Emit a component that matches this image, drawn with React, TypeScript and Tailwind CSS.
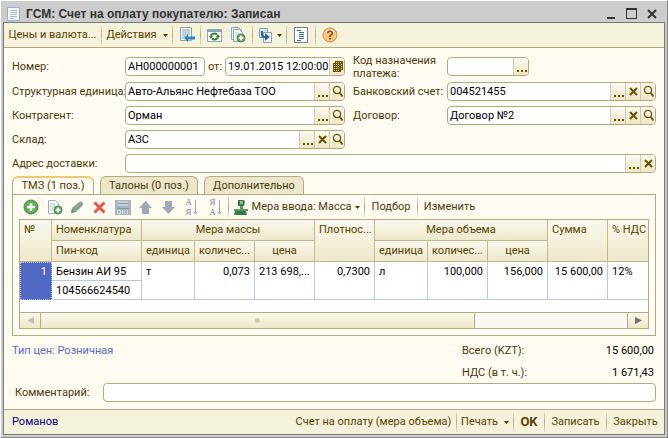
import React from "react";

type Tool = "more" | "clear" | "find" | "calendar";

const toolNames: Record<Tool, string> = {
  more: "Выбрать",
  clear: "Очистить",
  find: "Открыть",
  calendar: "Календарь",
};

function ToolGlyph({ tool }: { tool: Tool }) {
  if (tool === "more")
    return (
      <svg width="13" height="17" viewBox="0 0 13 17" className="shrink-0" fill="#6b5200" shapeRendering="crispEdges">
        <path d="M2 12h2v2H2zM6 12h2v2H6zM10 12h2v2h-2z" />
      </svg>
    );
  if (tool === "clear")
    return (
      <svg width="13" height="17" viewBox="0 0 13 17" className="shrink-0" fill="none" stroke="#6b5200" strokeWidth="2">
        <path d="M3 5l7 7M10 5l-7 7" />
      </svg>
    );
  if (tool === "find")
    return (
      <svg width="13" height="17" viewBox="0 0 13 17" className="shrink-0" fill="none" stroke="#6b5200">
        <circle cx="6" cy="7" r="3.6" strokeWidth="1.3" />
        <path d="M8.5 9.5l3 4" strokeWidth="1.8" />
      </svg>
    );
  return (
    <svg width="13" height="17" viewBox="0 0 13 17" className="shrink-0" shapeRendering="crispEdges">
      <path d="M4 3h8v9h-2v2H2V5h2z" fill="#6b5200" />
      <path d="M5 4h1v1H5zM7 4h1v1H7zM9 4h1v1H9zM3 6h1v1H3zM5 6h1v1H5zM7 6h1v1H7zM10 6h1v1h-1zM3 8h1v1H3zM5 8h1v1H5zM7 8h1v1H7zM10 8h1v1h-1zM3 10h1v1H3zM5 10h1v1H5zM7 10h1v1H7zM10 10h1v1h-1zM3 12h1v1H3zM5 12h1v1H5zM7 12h1v1H7z" fill="#e9dfb8" />
    </svg>
  );
}

function Field({ id, value = "", tools = [], className = "w-full" }: { id: string; value?: string; tools?: Tool[]; className?: string }) {
  return (
    <div className={`flex h-[19px] overflow-hidden rounded border border-[#b3aa80] bg-white ${className}`}>
      <input id={id} defaultValue={value} className="min-w-0 flex-1 bg-transparent pl-0.5 text-black outline-none" />
      {tools.map((tool) => (
        <button
          key={tool}
          type="button"
          aria-label={toolNames[tool]}
          className="flex w-[15px] shrink-0 items-center justify-center border-l border-[#d3ccab] bg-linear-to-b from-[#fbf9ee] to-[#ece7c8]"
        >
          <ToolGlyph tool={tool} />
        </button>
      ))}
    </div>
  );
}

function Separator() {
  return <span className="h-5 w-px shrink-0 bg-linear-to-b from-[#e5e0c4] via-[#b3aa80] to-[#e5e0c4]" />;
}

function Caret() {
  return (
    <svg width="5" height="3" viewBox="0 0 5 3" className="shrink-0" fill="#4d3b00">
      <path d="M0 0h5L2.5 3z" />
    </svg>
  );
}

function Action({ className, label, children }: { className: string; label?: string; children: React.ReactNode }) {
  return (
    <button type="button" aria-label={label} className={`flex h-6 shrink-0 items-center justify-center whitespace-nowrap ${className}`}>
      {children}
    </button>
  );
}

function PlusBadge({ x, y, r }: { x: number; y: number; r: number }) {
  const arm = r * 0.55;
  return (
    <>
      <circle cx={x} cy={y} r={r} fill="#69b05e" stroke="#438645" />
      <path d={`M${x - arm} ${y}h${arm * 2}M${x} ${y - arm}v${arm * 2}`} stroke="#fff" strokeWidth="2" />
    </>
  );
}

function CopyAddIcon() {
  return (
    <svg width="16" height="16" viewBox="0 0 16 16" fill="none">
      <path d="M1.5 .5h7l3 3v9h-10z" fill="#edf3f6" stroke="#8da7b8" />
      <path d="M3.5 2.5h6l3 3v9h-9z" fill="#fff" stroke="#8da7b8" />
      <path d="M5 6h4M5 8h3M5 10h3" stroke="#b8cbd7" />
      <PlusBadge x={11} y={11} r={4} />
    </svg>
  );
}

function PageAddIcon() {
  return (
    <svg width="16" height="16" viewBox="0 0 16 16" fill="none">
      <path d="M1.5 1.5h7l3 3v10h-10z" fill="#fff" stroke="#9bb0bd" />
      <path d="M3 5h5M3 7h6M3 9h4M3 11h3" stroke="#b4c7d3" />
      <PlusBadge x={11} y={11} r={4} />
    </svg>
  );
}

function SortIcon({ top, bottom }: { top: string; bottom: string }) {
  return (
    <span className="flex items-center gap-px text-[#7d858e]">
      <span className="flex flex-col font-['Liberation_Serif',serif] text-[9px] leading-[10px]">
        <span>{top}</span>
        <span>{bottom}</span>
      </span>
      <svg width="6" height="17" viewBox="0 0 6 17" fill="none" stroke="#a2a6a9">
        <path d="M2.5 1v14M.5 12.5l2 2.5 2-2.5" />
      </svg>
    </span>
  );
}

function Tab({ active = false, className, children }: { active?: boolean; className: string; children: React.ReactNode }) {
  return (
    <button
      type="button"
      role="tab"
      aria-selected={active}
      className={`rounded-t-md border border-b-0 border-[#b3aa80] ${
        active ? "-mb-px h-[19px] border-t-2 border-t-[#eac974] bg-[#fffbf0] pb-px" : "h-[18px] bg-[#ece6ca]"
      } ${className}`}
    >
      {children}
    </button>
  );
}

const th = "border-r border-b border-[#c1b88e] bg-linear-to-b from-[#faf8ed] to-[#ede8ca] px-0.5 font-normal whitespace-nowrap";
const thLeft = `${th} pl-1 pr-0 text-left`;
const thTall = `${thLeft} pt-[3px] align-top`;
const td = "border-r border-b border-[#b4c9e6] px-1 pt-0.5 align-top leading-4 whitespace-nowrap";

export default function App() {
  return (
    <div className="flex min-h-screen flex-col border-t border-r border-b border-l border-t-white border-r-[#858585] border-b-[#858585] border-l-white bg-[#cccccc] px-0.5 pb-0.5 font-['Roboto','Liberation_Sans',sans-serif] text-[11px] leading-[14px] text-[#4b3a0c]">
      <header className="flex h-[21px] items-center pt-1 pr-1 pl-1">
        <svg width="13" height="14" viewBox="0 0 13 14" fill="none">
          <path d="M.5.5h12v13H.5z" fill="#f5fafc" stroke="#93afc1" />
          <path d="M3 3.5h7M3 5.5h7M3 7.5h7M3 9.5h7M3 11.5h4" stroke="#a2bccb" />
        </svg>
        <h1 className="ml-1.5 flex-1 font-['Liberation_Sans',sans-serif] text-[12px] font-bold text-[#333333]">ГСМ: Счет на оплату покупателю: Записан</h1>
        <button type="button" aria-label="Свернуть" className="w-5">
          <svg width="20" height="13" viewBox="0 0 20 13"><path d="M6 10h8v2H6z" fill="#333" /></svg>
        </button>
        <button type="button" aria-label="Развернуть" className="w-5">
          <svg width="20" height="13" viewBox="0 0 20 13"><path d="M5 1h11v11H5zM6 3v8h9V3z" fillRule="evenodd" fill="#333" /></svg>
        </button>
        <button type="button" aria-label="Закрыть окно" className="w-5">
          <svg width="20" height="13" viewBox="0 0 20 13"><path d="M7 3l8 8M15 3l-8 8" stroke="#333" strokeWidth="2" /></svg>
        </button>
      </header>

      <div className="flex flex-1 flex-col border border-[#777777] bg-[#fffbf0]">
        <nav className="flex h-[25px] items-center border-b border-[#b3aa80] bg-[#f5f2dc] text-[#594300]">
          <Action className="w-[97px]">Цены и валюта...</Action>
          <Separator />
          <Action className="w-[70px] gap-1.5">Действия <Caret /></Action>
          <Separator />
          <Action className="w-[27px]" label="Перейти">
            <svg width="16" height="16" viewBox="0 0 16 16" fill="none">
              <path d="M1.5.5h11v13h-11z" fill="#f4f8fa" stroke="#879fae" />
              <path d="M3 3h8M3 5h8M3 7h8M3 9h4M3 11h2" stroke="#8ca6b8" />
              <path d="M5 11l4-4v2.5h7v3H9V15z" fill="#3580b5" />
            </svg>
          </Action>
          <Separator />
          <Action className="w-[27px]" label="Обновить">
            <svg width="15" height="13" viewBox="0 0 15 13" fill="none">
              <path d="M.5.5h14v12H.5z" fill="#fff" stroke="#8fa8b5" />
              <path d="M1 1h13v2H1z" fill="#87a6b8" />
              <path d="M4 7a3.5 3 0 0 1 6-1.5M11 8a3.5 3 0 0 1-6 1.5" stroke="#398237" strokeWidth="2" />
              <path d="M2 7h4L4 10zM9 8h4L11 5z" fill="#398237" />
            </svg>
          </Action>
          <Action className="w-6 pr-1" label="Скопировать"><CopyAddIcon /></Action>
          <Separator />
          <Action className="w-[33px] gap-1" label="Ввести на основании">
            <svg width="15" height="15" viewBox="0 0 15 15" fill="none">
              <path d="M1.5.5h8v9h-8z" fill="#dfe8ef" stroke="#8ba2b4" />
              <path d="M5.5 4.5h8v10h-8z" fill="#f7fafc" stroke="#8ba2b4" />
              <path d="M4 3v4q0 2 3 2" stroke="#276b9e" strokeWidth="2" />
              <path d="M7 5l5 4-5 4z" fill="#276b9e" />
            </svg>
            <Caret />
          </Action>
          <Separator />
          <Action className="w-7" label="Список">
            <svg width="14" height="16" viewBox="0 0 14 16" fill="none" shapeRendering="crispEdges">
              <path d="M.5.5h13v15H.5z" fill="#fff" stroke="#717d89" />
              <path d="M3 3.5h4M5 5.5h5M5 7.5h5M5 9.5h5M5 11.5h5M3 13.5h4" stroke="#356d9c" />
            </svg>
          </Action>
          <Separator />
          <Action className="w-[27px]" label="Справка">
            <svg width="16" height="16" viewBox="0 0 16 16" fill="none">
              <circle cx="8" cy="8" r="7" fill="#fcc581" stroke="#cc8f4c" />
              <path d="M3 5a6 5 0 0 1 10 0q-5 3-10 0" fill="#fee8c7" />
              <path d="M5.8 6.5q0-2.3 2.2-2.3t2.2 2Q10.2 7.5 8 8.7v1.3" stroke="#855018" strokeWidth="1.6" />
              <path d="M7.2 11h1.7v1.6H7.2z" fill="#855018" />
            </svg>
          </Action>
        </nav>

        <main className="flex flex-1 flex-col px-2 pt-[9px]">
          <form className="grid grid-cols-[113px_minmax(0,220fr)_102px_minmax(0,209fr)] items-center gap-y-[5px]">
            <label htmlFor="number">Номер:</label>
            <div className="mb-px flex items-center">
              <Field id="number" value="АН000000001" className="w-20 shrink-0" />
              <label htmlFor="date" className="w-5 shrink-0 text-center">от:</label>
              <Field id="date" value="19.01.2015 12:00:00" tools={["calendar"]} className="min-w-0 flex-1" />
            </div>
            <label htmlFor="purpose" className="-my-2 pl-2 leading-[13px]">Код назначения платежа:</label>
            <Field id="purpose" tools={["more"]} className="mb-px w-[82px]" />

            <label htmlFor="unit" className="whitespace-nowrap">Структурная единица:</label>
            <Field id="unit" value="Авто-Альянс Нефтебаза ТОО" tools={["more", "find"]} />
            <label htmlFor="account" className="pl-2 whitespace-nowrap">Банковский счет:</label>
            <Field id="account" value="004521455" tools={["more", "clear", "find"]} />

            <label htmlFor="partner">Контрагент:</label>
            <Field id="partner" value="Орман" tools={["more", "find"]} />
            <label htmlFor="contract" className="pl-2">Договор:</label>
            <Field id="contract" value="Договор №2" tools={["more", "clear", "find"]} />

            <label htmlFor="store">Склад:</label>
            <Field id="store" value="АЗС" tools={["more", "clear", "find"]} />
            <label htmlFor="address" className="col-start-1">Адрес доставки:</label>
            <Field id="address" tools={["more", "clear"]} className="col-span-3" />
          </form>

          <div role="tablist" className="mt-[3px] flex items-end gap-1.5 text-[#4b3a0c]">
            <Tab active className="w-[82px]">ТМЗ (1 поз.)</Tab>
            <Tab className="w-[98px]">Талоны (0 поз.)</Tab>
            <Tab className="w-[100px]">Дополнительно</Tab>
          </div>

          <section className="border border-[#b3aa80] px-1.5 pb-1.5">
            <div className="flex h-6 items-center">
              <Action className="w-6" label="Добавить">
                <svg width="16" height="16" viewBox="0 0 16 16" fill="none">
                  <circle cx="8" cy="8" r="7" fill="#62ad59" stroke="#3d8944" />
                  <path d="M4 8h8M8 4v8" stroke="#fff" strokeWidth="2.5" />
                </svg>
              </Action>
              <Action className="w-[23px]" label="Добавить копированием"><PageAddIcon /></Action>
              <Action className="w-[22px]" label="Изменить строку">
                <svg width="14" height="14" viewBox="0 0 14 14"><path d="M1 13l1-5 7-6q2-1 3 0t1 3l-7 7z" fill="#8aa58c" /><path d="M2 9l3 3-4 1z" fill="#6c9170" /></svg>
              </Action>
              <Action className="w-[23px]" label="Удалить">
                <svg width="13" height="13" viewBox="0 0 13 13"><path d="M1.5 1.5l10 10M11.5 1.5l-10 10" stroke="#e35a46" strokeWidth="3" /></svg>
              </Action>
              <Action className="w-[23px]" label="Завершить редактирование">
                <svg width="16" height="15" viewBox="0 0 16 15" fill="none">
                  <path d="M0 0h16v15H0z" fill="#a8b4bf" />
                  <path d="M3 1h10v5H3z" fill="#c7d0d7" />
                  <path d="M3 3.5h10M2 8.5h12" stroke="#8797a5" />
                  <path d="M2.5 10.5h3v3h-3zM7.5 10v4M10.5 10l-2 2 2 2M12.5 10v4" stroke="#dbe2e7" />
                </svg>
              </Action>
              <Action className="w-[23px]" label="Вверх">
                <svg width="13" height="13" viewBox="0 0 13 13"><path d="M6.5 0L13 7H10v6H3V7H0z" fill="#9dabb7" /></svg>
              </Action>
              <Action className="w-[23px]" label="Вниз">
                <svg width="13" height="13" viewBox="0 0 13 13"><path d="M6.5 13L13 6H10V0H3v6H0z" fill="#9dabb7" /></svg>
              </Action>
              <Action className="w-6" label="Сортировать по возрастанию"><SortIcon top="А" bottom="Я" /></Action>
              <Action className="w-6" label="Сортировать по убыванию"><SortIcon top="Я" bottom="А" /></Action>
              <Separator />
              <Action className="w-[135px] gap-1">
                <svg width="15" height="16" viewBox="0 0 15 16">
                  <path d="M5 1h6l1 2-1 4H5z" fill="#397b48" />
                  <path d="M7 2h3v3H7z" fill="#91bd95" />
                  <path d="M7 7h3v3h5v2H1v-2h6z" fill="#5a9963" />
                  <path d="M2 12h11l1 4H1z" fill="#397b48" />
                </svg>
                Мера ввода: Масса <Caret />
              </Action>
              <Separator />
              <Action className="w-[52px]">Подбор</Action>
              <Separator />
              <Action className="w-[63px]">Изменить</Action>
            </div>

            <div className="border border-[#b3aa80] bg-white">
              <table className="w-full table-fixed border-separate border-spacing-0">
                <colgroup>
                  <col className="w-[32px]" />
                  <col className="w-[90px]" />
                  <col className="w-[53px]" />
                  <col className="w-[60px]" />
                  <col className="w-[60px]" />
                  <col className="w-[60px]" />
                  <col className="w-[53px]" />
                  <col className="w-[60px]" />
                  <col className="w-[60px]" />
                  <col className="w-[60px]" />
                  <col className="w-[40px]" />
                </colgroup>
                <thead className="text-[#594300]">
                  <tr className="h-[21px]">
                    <th rowSpan={2} className={thTall}>№</th>
                    <th className={thLeft}>Номенклатура</th>
                    <th colSpan={3} className={th}>Мера массы</th>
                    <th rowSpan={2} className={thTall}>Плотнос...</th>
                    <th colSpan={3} className={th}>Мера объема</th>
                    <th rowSpan={2} className={thTall}>Сумма</th>
                    <th rowSpan={2} className={`${thTall} border-r-0`}>% НДС</th>
                  </tr>
                  <tr className="h-[21px]">
                    <th className={thLeft}>Пин-код</th>
                    <th className={th}>единица</th>
                    <th className={th}>количес...</th>
                    <th className={th}>цена</th>
                    <th className={th}>единица</th>
                    <th className={th}>количес...</th>
                    <th className={th}>цена</th>
                  </tr>
                </thead>
                <tbody className="text-black">
                  <tr className="h-[19px]">
                    <td rowSpan={2} className="border border-dotted border-[#b8c5f0] bg-[#5068c3] px-1 pt-px text-right align-top leading-4 text-white">1</td>
                    <td className={td}>Бензин АИ 95</td>
                    <td rowSpan={2} className={td}>т</td>
                    <td rowSpan={2} className={`${td} text-right`}>0,073</td>
                    <td rowSpan={2} className={td}>213 698,...</td>
                    <td rowSpan={2} className={`${td} text-right`}>0,7300</td>
                    <td rowSpan={2} className={td}>л</td>
                    <td rowSpan={2} className={`${td} text-right`}>100,000</td>
                    <td rowSpan={2} className={`${td} text-right`}>156,000</td>
                    <td rowSpan={2} className={`${td} text-right`}>15 600,00</td>
                    <td rowSpan={2} className={`${td} border-r-0`}>12%</td>
                  </tr>
                  <tr className="h-[19px]">
                    <td className={td}>104566624540</td>
                  </tr>
                </tbody>
              </table>
              <div className="mt-3 flex h-4 border-t border-[#b3aa80] bg-[#faf8f0]">
                <button type="button" aria-label="Прокрутить влево" className="flex w-[21px] items-center justify-center border-r border-[#b3aa80] bg-linear-to-b from-[#fbf9ee] to-[#ece7c8]">
                  <svg width="7" height="7" viewBox="0 0 7 7"><path d="M7 0v7L0 3.5z" fill="#c5c1ad" /></svg>
                </button>
                <div className="flex-1">
                  <div className="flex h-full w-[74%] items-center justify-center border-r border-[#b3aa80] bg-linear-to-b from-[#fbf9ee] to-[#ece7c8]">
                    <span className="size-[5px] rounded-full bg-[#cfcaaf]" />
                  </div>
                </div>
                <button type="button" aria-label="Прокрутить вправо" className="flex w-[21px] items-center justify-center border-l border-[#b3aa80] bg-linear-to-b from-[#fbf9ee] to-[#ece7c8]">
                  <svg width="7" height="7" viewBox="0 0 7 7"><path d="M0 0v7l7-3.5z" fill="#74726a" /></svg>
                </button>
              </div>
            </div>
          </section>

          <div className="flex justify-between pt-2">
            <a href="#prices" className="self-start text-[#566dc8]">Тип цен: Розничная</a>
            <dl className="grid grid-cols-[92px_102px] gap-y-2">
              <dt>Всего (KZT):</dt>
              <dd className="pr-0.5 text-right text-black">15 600,00</dd>
              <dt>НДС (в т. ч.):</dt>
              <dd className="pr-0.5 text-right text-black">1 671,43</dd>
            </dl>
          </div>

          <div className="mt-[3px] mb-[7px] flex items-center">
            <label htmlFor="comment" className="w-[91px] shrink-0 pl-[3px]">Комментарий:</label>
            <Field id="comment" className="min-w-0 flex-1" />
          </div>
        </main>

        <footer className="flex h-[25px] items-center border-t border-[#b3aa80] bg-[#f5f2dc] text-[#594300]">
          <span className="flex-1 pl-2 text-[#000080]">Романов</span>
          <Action className="w-[165px]">Счет на оплату (мера объема)</Action>
          <Separator />
          <Action className="w-14 gap-1.5">Печать <Caret /></Action>
          <Separator />
          <Action className="w-[30px] text-[13px] font-bold">OK</Action>
          <Separator />
          <Action className="w-[61px]">Записать</Action>
          <Separator />
          <Action className="w-[57px]">Закрыть</Action>
        </footer>
      </div>
    </div>
  );
}
